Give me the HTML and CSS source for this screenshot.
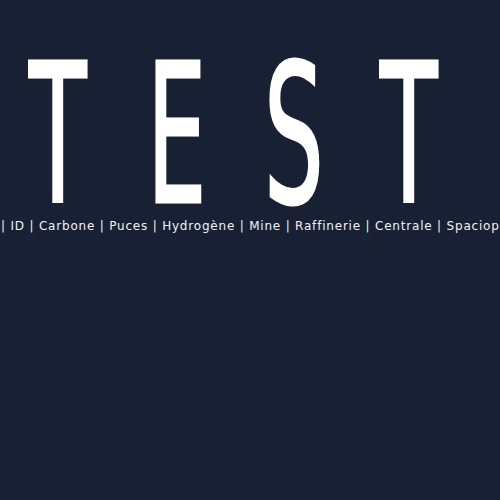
FILE: index.html
```html
<!DOCTYPE html>
<html lang="fr">
<head>
<meta charset="utf-8">
<title>TEST</title>
<link rel="stylesheet" href="styles.css">
</head>
<body>
<main class="page">
  <h1 class="title">
    <span class="cell"><span class="glyph">T</span></span>
    <span class="cell"><span class="glyph">E</span></span>
    <span class="cell"><span class="glyph">S</span></span>
    <span class="cell"><span class="glyph">T</span></span>
  </h1>
  <p class="menu">| ID | Carbone | Puces | Hydrogène | Mine | Raffinerie | Centrale | Spacioport</p>
</main>
</body>
</html>
```
FILE: styles.css
```css
html, body {
  margin: 0;
  padding: 0;
  background: #182033;
  width: 500px;
  height: 500px;
  overflow: hidden;
}
.page {
  padding-top: 61px;
}
.title {
  margin: 0 0 0 -1px;
  display: flex;
  font-family: "DejaVu Sans", sans-serif;
  font-weight: normal;
  font-size: 192px;
  line-height: 150px;
  color: #ffffff;
}
.cell {
  width: 117px;
  flex: none;
  text-align: center;
}
.glyph {
  display: inline-block;
  transform: scaleX(0.49);
  -webkit-text-stroke: 3px #ffffff;
}
.menu {
  margin: 8px 0 0 0;
  white-space: nowrap;
  padding-left: 1px;
  font-family: "DejaVu Sans", sans-serif;
  font-size: 12px;
  line-height: 14px;
  letter-spacing: 0.8px;
  color: #f2f3f5;
}
```
